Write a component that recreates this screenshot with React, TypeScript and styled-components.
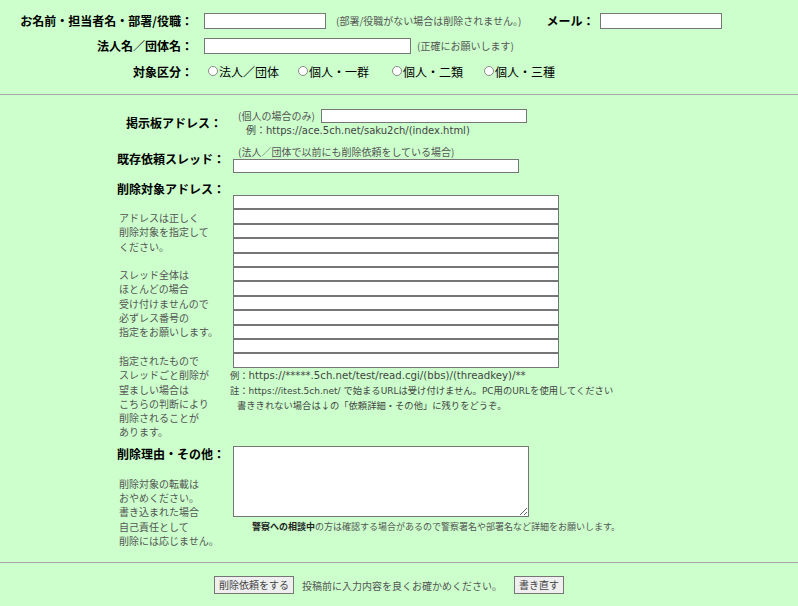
import React from 'react';
import styled, { createGlobalStyle } from 'styled-components';

const GlobalStyle = createGlobalStyle`
  html, body {
    margin: 0;
    padding: 0;
    background: #ccffcc;
  }
  body {
    font-family: "Noto Sans CJK JP", "Liberation Sans", sans-serif;
    color: #000;
  }
`;

const radioOptions = [
  { label: '法人／団体', width: 90 },
  { label: '個人・一群', width: 94 },
  { label: '個人・二類', width: 92 },
  { label: '個人・三種', width: 0 }
];

const App: React.FC = () => {
  return (
    <Page>
      <GlobalStyle />
      <Header>
        <HeadRow>
          <HeadLabel>お名前・担当者名・部署/役職：</HeadLabel>
          <Field $w={122} $h={16} />
          <Note $ml={10}>(部署/役職がない場合は削除されません。)</Note>
          <InlineLabel>メール：</InlineLabel>
          <Field $w={122} $h={16} />
        </HeadRow>
        <HeadRow>
          <HeadLabel>法人名／団体名：</HeadLabel>
          <Field $w={207} $h={16} />
          <Note $ml={6}>(正確にお願いします)</Note>
        </HeadRow>
        <HeadRow $h={26}>
          <HeadLabel>対象区分：</HeadLabel>
          <Choices>
            {radioOptions.map((o) => (
              <Choice key={o.label} $w={o.width}>
                <Dot />
                {o.label}
              </Choice>
            ))}
          </Choices>
        </HeadRow>
      </Header>

      <Rule $mt={10} />

      <FormRow $mt={13} $center>
        <RowLabel $right>掲示板アドレス：</RowLabel>
        <Cell>
          <Line $h={15}>
            <Note $ml={5}>(個人の場合のみ)</Note>
            <Field $w={206} $h={14} $ml={6} />
          </Line>
          <Line $h={14}>
            <Example $ml={13} $size={10}>
              例：<Url $size={10}>https://ace.5ch.net/saku2ch/(index.html)</Url>
            </Example>
          </Line>
        </Cell>
      </FormRow>

      <FormRow $mt={7} $center>
        <RowLabel $right>既存依頼スレッド：</RowLabel>
        <Cell>
          <Line $h={15}>
            <Note $ml={5}>(法人／団体で以前にも削除依頼をしている場合)</Note>
          </Line>
          <Field $w={286} $h={14} />
        </Cell>
      </FormRow>

      <FormRow $mt={8}>
        <LeftCell>
          <RowLabel>削除対象アドレス：</RowLabel>
          <Hint $mt={14}>
            アドレスは正しく<br />
            削除対象を指定して<br />
            ください。<br />
            <br />
            スレッド全体は<br />
            ほとんどの場合<br />
            受け付けませんので<br />
            必ずレス番号の<br />
            指定をお願いします。<br />
            <br />
            指定されたもので<br />
            スレッドごと削除が<br />
            望ましい場合は<br />
            こちらの判断により<br />
            削除されることが<br />
            あります。
          </Hint>
        </LeftCell>
        <Cell $mt={14}>
          {Array.from({ length: 12 }).map((_, i) => (
            <StackField key={i} />
          ))}
          <Example $ml={-3}>
            例：<Url $size={10.2}>https://*****.5ch.net/test/read.cgi/(bbs)/(threadkey)/**</Url>
          </Example>
          <Example $ml={-3}>
            註：<Url $size={9}>https://itest.5ch.net/ </Url>で始まる<Url $size={9}>URL</Url>は受け付けません。
            <Url $size={9}>PC</Url>用の<Url $size={9}>URL</Url>を使用してください
          </Example>
          <Example $ml={4}>書ききれない場合は↓の「依頼詳細・その他」に残りをどうぞ。</Example>
        </Cell>
      </FormRow>

      <FormRow $mt={6}>
        <LeftCell>
          <RowLabel>削除理由・その他：</RowLabel>
          <Hint $mt={15}>
            削除対象の転載は<br />
            おやめください。<br />
            書き込まれた場合<br />
            自己責任として<br />
            削除には応じません。
          </Hint>
        </LeftCell>
        <Cell>
          <Memo />
          <Police>
            <strong>警察への相談中</strong>の方は確認する場合があるので警察署名や部署名など詳細をお願いします。
          </Police>
        </Cell>
      </FormRow>

      <Rule $mt={14} />

      <Actions>
        <Button>削除依頼をする</Button>
        <ActionText>投稿前に入力内容を良くお確かめください。</ActionText>
        <Button>書き直す</Button>
      </Actions>
    </Page>
  );
};

export default App;

const Page = styled.div`
  width: 798px;
  height: 606px;
  overflow: hidden;
  background: #ccffcc;
`;

const Header = styled.div`
  padding-top: 8px;
`;

const HeadRow = styled.div<{ $h?: number }>`
  display: flex;
  align-items: center;
  height: ${(p) => p.$h ?? 25}px;
`;

const HeadLabel = styled.div`
  flex-shrink: 0;
  width: 193px;
  padding-right: 11px;
  box-sizing: content-box;
  text-align: right;
  font-size: 12px;
  font-weight: bold;
  white-space: nowrap;
`;

const InlineLabel = styled.span`
  margin: 0 6px 0 25px;
  font-size: 12px;
  font-weight: bold;
  white-space: nowrap;
`;

const Field = styled.input<{ $w: number; $h: number; $ml?: number }>`
  display: block;
  box-sizing: border-box;
  width: ${(p) => p.$w}px;
  height: ${(p) => p.$h}px;
  margin: 0 0 0 ${(p) => p.$ml ?? 0}px;
  padding: 0 2px;
  border: 1px solid #767676;
  background: #fff;
  font-family: inherit;
  font-size: 11px;
  outline: none;
`;

const StackField = styled.input`
  display: block;
  box-sizing: border-box;
  width: 326px;
  height: 14.4px;
  margin: 0;
  padding: 0 2px;
  border: 1px solid #767676;
  background: #fff;
  outline: none;
`;

const Note = styled.span<{ $ml?: number }>`
  margin-left: ${(p) => p.$ml ?? 0}px;
  font-size: 10px;
  line-height: 14px;
  color: #555;
  white-space: nowrap;
`;

const Choices = styled.div`
  display: flex;
  align-items: center;
  margin-left: 4px;
`;

const Choice = styled.label<{ $w: number }>`
  display: flex;
  align-items: center;
  width: ${(p) => (p.$w ? `${p.$w}px` : 'auto')};
  font-size: 12px;
  white-space: nowrap;
`;

const Dot = styled.span`
  width: 10px;
  height: 10px;
  margin-right: 1px;
  box-sizing: border-box;
  border: 1px solid #8a8a8a;
  border-radius: 50%;
  background: #fff;
`;

const Rule = styled.hr<{ $mt: number }>`
  height: 0;
  margin: ${(p) => p.$mt}px 0 0 0;
  border: none;
  border-top: 1px solid #a8a8a8;
`;

const FormRow = styled.div<{ $mt: number; $center?: boolean }>`
  display: flex;
  align-items: ${(p) => (p.$center ? 'center' : 'flex-start')};
  margin-top: ${(p) => p.$mt}px;
  padding-left: 117px;
`;

const LeftCell = styled.div`
  flex-shrink: 0;
  width: 105px;
  margin-right: 11px;
`;

const RowLabel = styled.div<{ $right?: boolean }>`
  flex-shrink: 0;
  width: 105px;
  margin-right: 11px;
  text-align: ${(p) => (p.$right ? 'right' : 'left')};
  font-size: 12px;
  font-weight: bold;
  line-height: 16px;
  white-space: nowrap;
  ${LeftCell} & {
    margin-right: 0;
  }
`;

const Cell = styled.div<{ $mt?: number }>`
  display: flex;
  flex-direction: column;
  margin-top: ${(p) => p.$mt ?? 0}px;
`;

const Line = styled.div<{ $h: number }>`
  display: flex;
  align-items: center;
  height: ${(p) => p.$h}px;
`;

const Example = styled.div<{ $ml?: number; $size?: number }>`
  margin-left: ${(p) => p.$ml ?? 0}px;
  font-size: ${(p) => p.$size ?? 9.3}px;
  line-height: 14px;
  color: #444;
  white-space: nowrap;
`;

const Url = styled.span<{ $size: number }>`
  font-family: "DejaVu Sans", "Noto Sans CJK JP", sans-serif;
  font-size: ${(p) => p.$size}px;
`;

const Hint = styled.div<{ $mt: number }>`
  margin: ${(p) => p.$mt}px 0 0 2px;
  font-size: 10px;
  line-height: 14.3px;
  color: #555;
  white-space: nowrap;
`;

const Memo = styled.textarea`
  display: block;
  box-sizing: border-box;
  width: 296px;
  height: 71px;
  margin: 0;
  padding: 2px;
  border: 1px solid #767676;
  background: #fff;
  outline: none;
`;

const Police = styled.div`
  margin: 3px 0 0 19px;
  font-size: 9px;
  line-height: 14px;
  color: #555;
  white-space: nowrap;

  strong {
    color: #222;
  }
`;

const Actions = styled.div`
  display: flex;
  align-items: center;
  margin-top: 13px;
  padding-left: 214px;
`;

const Button = styled.button`
  box-sizing: border-box;
  height: 18px;
  margin: 0;
  padding: 0 4px;
  border: 1px solid #767676;
  border-radius: 0;
  background: #efefef;
  color: #444;
  font-family: inherit;
  font-size: 10px;
  line-height: 16px;
`;

const ActionText = styled.span`
  margin: 0 12px 0 8px;
  font-size: 10px;
  color: #555;
  white-space: nowrap;
`;
